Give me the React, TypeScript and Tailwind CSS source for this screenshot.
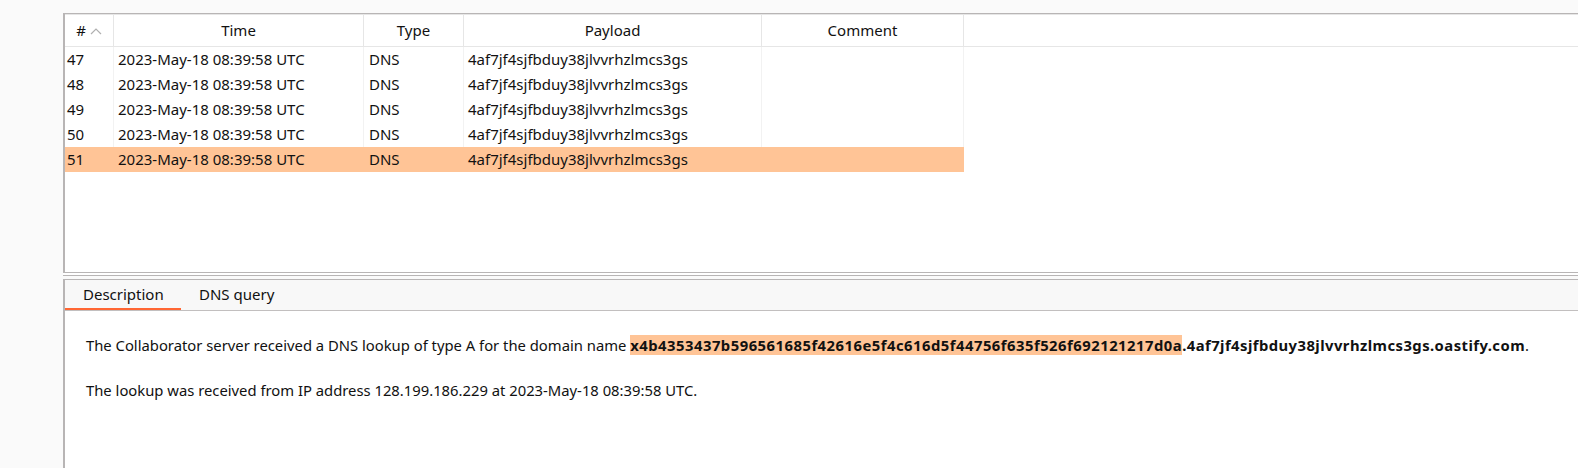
import React from 'react';

const rows = [47, 48, 49, 50, 51];
const payload = '4af7jf4sjfbduy38jlvvrhzlmcs3gs';
const time = '2023-May-18 08:39:58 UTC';

const cols = [
  { label: 'Time', w: 'w-[250px]' },
  { label: 'Type', w: 'w-[100px]' },
  { label: 'Payload', w: 'w-[298px]' },
  { label: 'Comment', w: 'w-[202px]' },
];

const App: React.FC = () => {
  return (
    <div className="w-[1578px] h-[468px] bg-[#fafafa] pt-[13px] pl-[63px] overflow-hidden font-['Noto_Sans',sans-serif] text-[15px] text-[#111]">
      {/* Results table */}
      <div className="h-[260px] bg-white border-t border-l-2 border-b border-[#b8b5b5] flex flex-col">
        <div className="flex h-[33px] border-t border-b border-[#e6e6e6] shrink-0">
          <div className="w-[49px] flex items-center justify-center gap-[4px] border-r border-[#e6e6e6]">
            <span>#</span>
            <svg width="12" height="8" viewBox="0 0 12 8" className="mt-[1px]">
              <path d="M1 7 L6 2 L11 7" fill="none" stroke="#b0b0b0" strokeWidth="1.2" />
            </svg>
          </div>
          {cols.map((c) => (
            <div key={c.label} className={`${c.w} flex items-center justify-center border-r border-[#e6e6e6]`}>
              {c.label}
            </div>
          ))}
        </div>
        <div className="flex flex-col">
          {rows.map((n) => {
            const sel = n === 51;
            const sep = sel ? 'border-transparent' : 'border-[#f2f2f2]';
            return (
              <div key={n} className={`flex h-[25px] items-center w-fit ${sel ? 'bg-[#ffc496]' : ''}`}>
                <div className={`w-[49px] h-full flex items-center pl-[2px] border-r ${sep}`}>{n}</div>
                <div className={`w-[250px] h-full flex items-center pl-[4px] border-r ${sep}`}>{time}</div>
                <div className={`w-[100px] h-full flex items-center pl-[5px] border-r ${sep}`}>DNS</div>
                <div className={`w-[298px] h-full flex items-center pl-[4px] border-r ${sep}`}>{payload}</div>
                <div className={`w-[202px] h-full border-r ${sep}`} />
              </div>
            );
          })}
        </div>
      </div>

      {/* Splitter */}
      <div className="h-[3px] bg-white border-b border-[#b8b5b5]" />
      <div className="h-[3px]" />

      {/* Detail panel */}
      <div className="h-[200px] border-t border-l-2 border-[#b8b5b5] flex flex-col">
        <div className="h-[31px] bg-[#f8f8f8] flex items-end border-b border-[#c2bfbf] shrink-0">
          <div className="w-[116px] h-full flex flex-col">
            <div className="flex-1 flex items-center pl-[18px]">Description</div>
            <div className="h-[2px] bg-[#ff6633]" />
          </div>
          <div className="h-full flex items-center pl-[18px] pb-[2px]">DNS query</div>
        </div>
        <div className="flex-1 bg-white pl-[21px] pt-[23px] text-[14.8px]">
          <p className="leading-[22px]">
            The Collaborator server received a DNS lookup of type A for the domain name{' '}
            <b className="bg-[#ffc496] tracking-[0.5px]">x4b4353437b596561685f42616e5f4c616d5f44756f635f526f692121217d0a</b>
            <b className="tracking-[0.45px]">.4af7jf4sjfbduy38jlvvrhzlmcs3gs.oastify.com</b>.
          </p>
          <p className="leading-[22px] mt-[23px]">
            The lookup was received from IP address 128.199.186.229 at 2023-May-18 08:39:58 UTC.
          </p>
        </div>
      </div>
    </div>
  );
};

export default App;
